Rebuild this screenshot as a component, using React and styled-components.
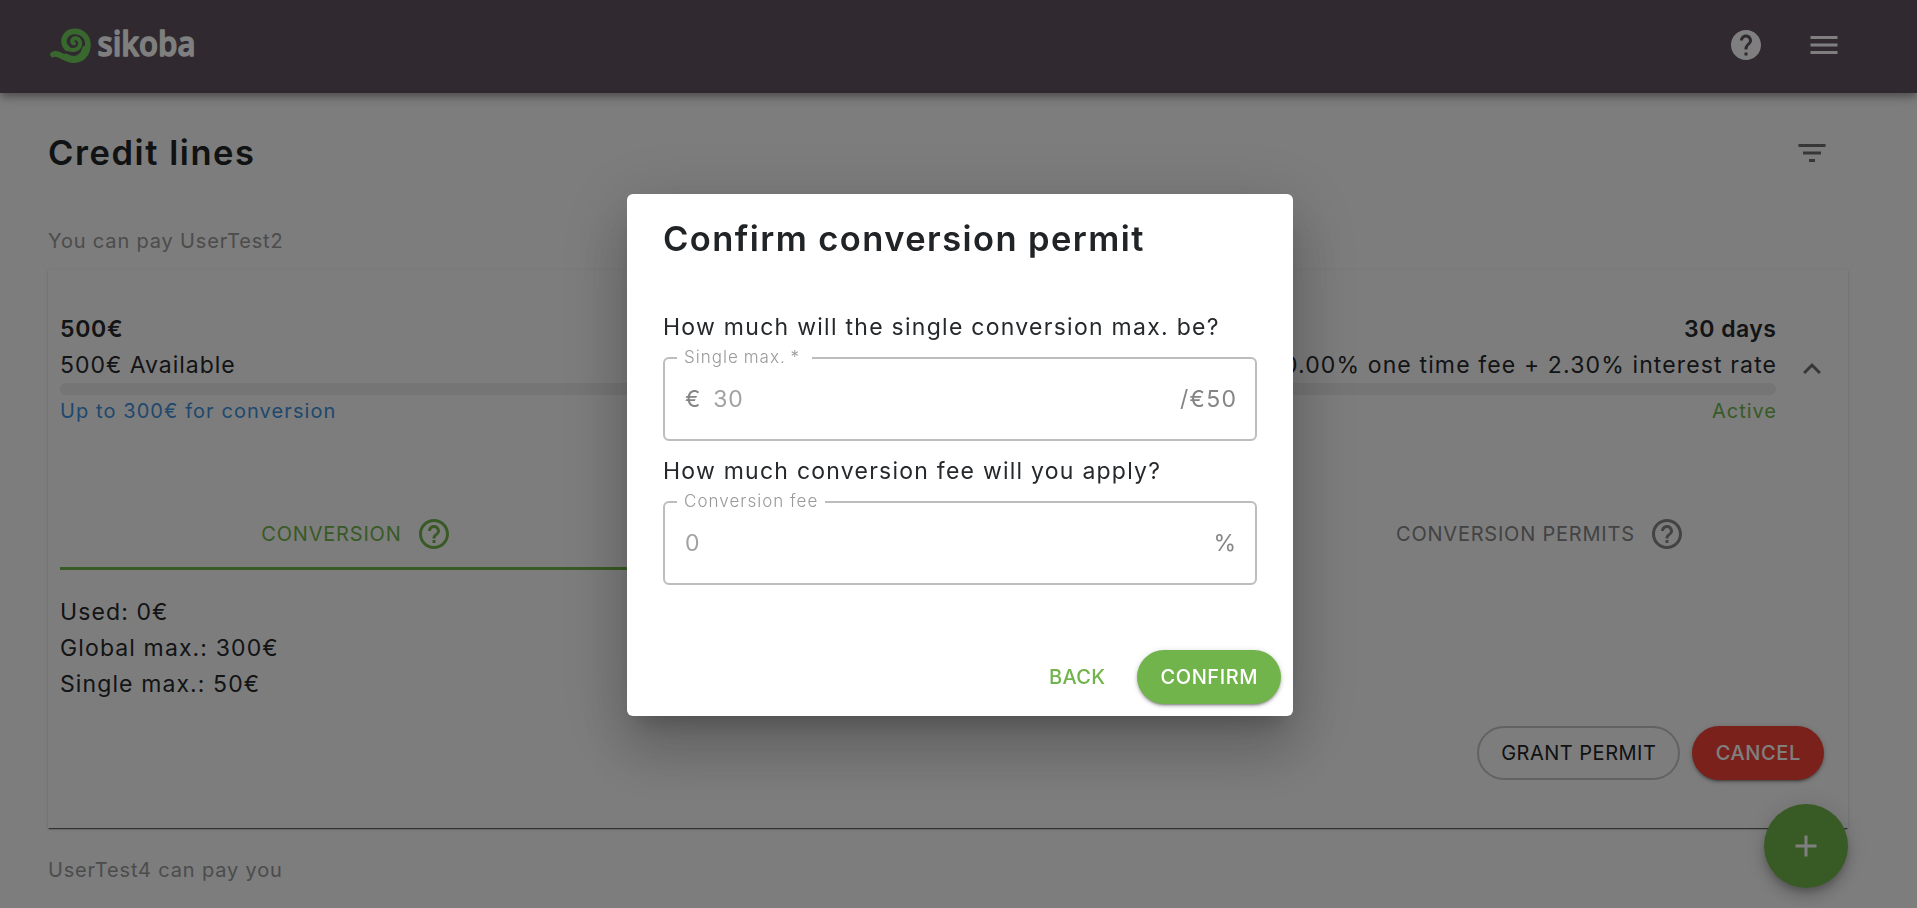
import React from "react";
import styled, { createGlobalStyle, css } from "styled-components";
import { MdAdd, MdExpandLess, MdFilterList, MdHelp, MdHelpOutline, MdMenu } from "react-icons/md";

const green = "#71b44b";

const GlobalStyle = createGlobalStyle`
  * { box-sizing: border-box; }
  html, body { margin: 0; height: 100%; overflow: hidden; }
  body {
    background: #fafafa;
    color: #26292c;
    font-family: Inter, "Liberation Sans", sans-serif;
    font-weight: 400;
  }
  button { font-family: inherit; cursor: pointer; }
`;

const Page = styled.div`
  height: 908px;
  overflow: hidden;
`;

/* The trailing letter space is taken back so that right-aligned text ends at its last glyph. */
const spaced = css`
  letter-spacing: ${(p) => p.$ls}px;
  margin-right: ${(p) => -p.$ls}px;
  white-space: nowrap;
`;

const Text = styled.span`
  display: block;
  font-size: 23px;
  line-height: 36px;
  font-weight: ${(p) => (p.$bold ? 600 : 400)};
  ${spaced}
`;

const Note = styled.span`
  display: block;
  font-size: 20px;
  line-height: 32px;
  color: ${(p) => p.$color};
  ${spaced}
`;

const Header = styled.header`
  position: relative;
  display: flex;
  align-items: center;
  justify-content: space-between;
  height: 93px;
  padding: 0 75px 3px 48px;
  background: #605460;
  color: #fff;
  box-shadow: 0 3px 6px -1.5px rgba(0, 0, 0, 0.2), 0 6px 7.5px rgba(0, 0, 0, 0.14), 0 1.5px 15px rgba(0, 0, 0, 0.12);
`;

const HeaderActions = styled.nav`
  display: flex;
  gap: 42px;
`;

const Main = styled.main`
  padding: 33px 69px 0 48px;
`;

const TitleRow = styled.div`
  display: flex;
  align-items: center;
  justify-content: space-between;
  height: 54px;
  padding-right: 18px;
  color: #6f6f6f;
`;

const Title = styled.h1`
  margin: 0;
  color: #212427;
  font-size: 34.5px;
  line-height: 54px;
  font-weight: 600;
  ${spaced}
`;

const SectionLabel = styled.p`
  margin: ${(p) => p.$top}px 0 0;
  font-size: 20px;
  line-height: 36px;
  color: #989898;
  letter-spacing: 0.84px;
`;

const Card = styled.section`
  height: 558px;
  margin-top: 11px;
  padding: 41px 12px 48px;
  background: #fafafa;
  box-shadow: 0 2px 1px -1px rgba(0, 0, 0, 0.5), 0 1px 1px rgba(0, 0, 0, 0.14), 0 1px 3px rgba(0, 0, 0, 0.12);
`;

const Summary = styled.div`
  display: flex;
  align-items: center;
  gap: 18px;
`;

const SummaryBody = styled.div`
  width: 1716px;
`;

const Line = styled.div`
  display: flex;
  justify-content: space-between;
`;

const Bar = styled.div`
  height: 12px;
  border-radius: 6px;
  background: #ebebeb;
`;

const Tabs = styled.div`
  display: grid;
  grid-template-columns: repeat(3, 1fr);
  height: 72px;
  margin-top: 71px;
`;

const Tab = styled.div`
  display: flex;
  align-items: center;
  justify-content: center;
  gap: 15px;
  border-bottom: 3px solid ${(p) => (p.$active ? green : "transparent")};
  padding: 3px 0 0 1px;
  color: ${(p) => (p.$active ? green : "#868686")};
`;

const Details = styled.div`
  margin-top: 24px;
`;

const CardActions = styled.div`
  display: flex;
  justify-content: flex-end;
  gap: 12px;
  margin: 24px 12px 0 0;
`;

const buttonKinds = {
  outlined: css`
    border: 2px solid #c4c4c4;
    color: #212427;
  `,
  danger: css`
    background: #f44336;
    color: #fff;
  `,
  primary: css`
    background: ${green};
    color: #fff;
  `,
  text: css`
    color: ${green};
  `,
};

const Button = styled.button`
  display: flex;
  align-items: center;
  justify-content: center;
  width: ${(p) => p.$width}px;
  height: 54px;
  padding: 0;
  border: 0;
  border-radius: 27px;
  background: transparent;
  font-size: 20px;
  font-weight: ${(p) => (p.$kind === "outlined" ? 400 : 450)};
  ${(p) => buttonKinds[p.$kind]}
  ${(p) =>
    (p.$kind === "danger" || p.$kind === "primary") &&
    css`
      box-shadow: 0 3px 1.5px -2px rgba(0, 0, 0, 0.2), 0 2px 3px rgba(0, 0, 0, 0.24), 0 1px 6px rgba(0, 0, 0, 0.14);
    `}
`;

const ButtonLabel = styled.span`
  ${spaced}
`;

const Fab = styled.button`
  position: fixed;
  left: 1764px;
  top: 804px;
  display: flex;
  align-items: center;
  justify-content: center;
  width: 84px;
  height: 84px;
  border: 0;
  border-radius: 50%;
  background: ${green};
  color: #fff;
  box-shadow: 0 4.5px 7.5px -1.5px rgba(0, 0, 0, 0.2), 0 9px 15px rgba(0, 0, 0, 0.14), 0 1.5px 27px rgba(0, 0, 0, 0.12);
`;

const Backdrop = styled.div`
  position: fixed;
  inset: 0;
  display: flex;
  align-items: center;
  justify-content: center;
  padding: 2px 0 0 3px;
  background: rgba(0, 0, 0, 0.5);
`;

const Dialog = styled.div`
  width: 666px;
  height: 522px;
  padding: 18px 36px 0;
  border-radius: 6px;
  background: #fff;
  box-shadow: 0 16.5px 22.5px -10.5px rgba(0, 0, 0, 0.2), 0 36px 57px 4.5px rgba(0, 0, 0, 0.14), 0 13.5px 69px 12px rgba(0, 0, 0, 0.12);
`;

const DialogTitle = styled(Title)`
  margin-bottom: 43px;
`;

const Field = styled.div`
  position: relative;
  display: flex;
  align-items: center;
  gap: 13px;
  height: 84px;
  margin: 12px 0;
  padding: 0 19px 0 20px;
  border: 2px solid #bdbdbd;
  border-radius: 6px;
  color: #858585;
`;

const FieldLabel = styled.label`
  position: absolute;
  left: 12px;
  top: -14px;
  width: ${(p) => p.$width}px;
  padding-left: 7px;
  background: #fff;
  color: #999;
  font-size: 17px;
  font-weight: 300;
  line-height: 24px;
  letter-spacing: 1.02px;
  word-spacing: ${(p) => p.$wordSpace || 0}px;
  white-space: nowrap;
`;

const Value = styled(Text)`
  color: #a2a2a2;
  flex: 1;
`;

const DialogActions = styled.div`
  display: flex;
  justify-content: flex-end;
  gap: 9px;
  margin: 65px -24px 0 0;
`;

const LogoSvg = styled.svg`
  overflow: visible;
`;

const Logo = () => (
  <LogoSvg width="152" height="44" viewBox="48 24 152 44" role="img" aria-label="sikoba">
    <g fill="none" stroke="#70d05c" strokeLinecap="round" strokeLinejoin="round">
      <path
        strokeWidth="5.6"
        d="M53 55.6C56 53.4 60 56.4 65 58.6C70 61.4 77 62.4 82 58.8C88.5 53.6 89.8 42.8 85 37C79.5 30.6 69.4 31 65.4 37.2C63 41.4 63.6 46.2 67 49.2"
      />
      <path strokeWidth="4" d="M66.2 48.4C70.4 52.6 77.4 51.6 79.6 47.2C81.4 43 78.6 38.8 75 39.2C71.6 39.8 71.4 43.6 74 44.4" />
      <path strokeWidth="7" d="M66 58.2C71 61 77 61 81 57.8C83.4 55.8 84.8 53.2 85.4 50.2" />
    </g>
    <text
      x="97.5"
      y="56.7"
      fill="#fff"
      stroke="#fff"
      strokeWidth="1.4"
      strokeLinejoin="round"
      fontFamily="'Open Sans', sans-serif"
      fontWeight="600"
      fontSize="34"
      textLength="98"
      lengthAdjust="spacingAndGlyphs"
    >
      sikoba
    </text>
  </LogoSvg>
);

export default function App() {
  return (
    <>
      <GlobalStyle />
      <Page>
        <Header>
          <Logo />
          <HeaderActions>
            <MdHelp size={36} />
            <MdMenu size={36} />
          </HeaderActions>
        </Header>
        <Main>
          <TitleRow>
            <Title $ls={1.57}>Credit lines</Title>
            <MdFilterList size={36} />
          </TitleRow>
          <SectionLabel $top={43}>You can pay UserTest2</SectionLabel>
          <Card>
            <Summary>
              <SummaryBody>
                <Line>
                  <Text $bold $ls={0.7}>500€</Text>
                  <Text $bold $ls={0.5}>30 days</Text>
                </Line>
                <Line>
                  <Text $ls={0.98}>500€ Available</Text>
                  <Text $ls={1.13}>0.00% one time fee + 2.30% interest rate</Text>
                </Line>
                <Bar />
                <Line>
                  <Note $color="#3f91dc" $ls={1.08}>Up to 300€ for conversion</Note>
                  <Note $color={green} $ls={0.95}>Active</Note>
                </Line>
              </SummaryBody>
              <MdExpandLess size={36} color="#6f6f6f" />
            </Summary>
            <Tabs>
              <Tab $active>
                <Note $ls={0.8}>CONVERSION</Note>
                <MdHelpOutline size={36} />
              </Tab>
              <Tab />
              <Tab>
                <Note $ls={0.78}>CONVERSION PERMITS</Note>
                <MdHelpOutline size={36} />
              </Tab>
            </Tabs>
            <Details>
              <Text $ls={1.1}>Used: 0€</Text>
              <Text $ls={1.12}>Global max.: 300€</Text>
              <Text $ls={1.1}>Single max.: 50€</Text>
            </Details>
            <CardActions>
              <Button $kind="outlined" $width={203}>
                <ButtonLabel $ls={0.5}>GRANT PERMIT</ButtonLabel>
              </Button>
              <Button $kind="danger" $width={132}>
                <ButtonLabel $ls={0.6}>CANCEL</ButtonLabel>
              </Button>
            </CardActions>
          </Card>
          <SectionLabel $top={24}>UserTest4 can pay you</SectionLabel>
        </Main>
        <Fab aria-label="Add">
          <MdAdd size={36} />
        </Fab>
      </Page>
      <Backdrop>
        <Dialog role="dialog">
          <DialogTitle as="h2" $ls={1.42}>Confirm conversion permit</DialogTitle>
          <Text $ls={1.27}>How much will the single conversion max. be?</Text>
          <Field>
            <FieldLabel $width={135} $wordSpace={-1}>Single max. *</FieldLabel>
            <Text $ls={0}>€</Text>
            <Value $ls={0.8}>30</Value>
            <Text $ls={1.3}>/€50</Text>
          </Field>
          <Text $ls={1.24}>How much conversion fee will you apply?</Text>
          <Field>
            <FieldLabel $width={148}>Conversion fee</FieldLabel>
            <Value $ls={1.2}>0</Value>
            <Text $ls={0}>%</Text>
          </Field>
          <DialogActions>
            <Button $kind="text" $width={102}>
              <ButtonLabel $ls={0.3}>BACK</ButtonLabel>
            </Button>
            <Button $kind="primary" $width={144}>
              <ButtonLabel $ls={0.55}>CONFIRM</ButtonLabel>
            </Button>
          </DialogActions>
        </Dialog>
      </Backdrop>
    </>
  );
}
